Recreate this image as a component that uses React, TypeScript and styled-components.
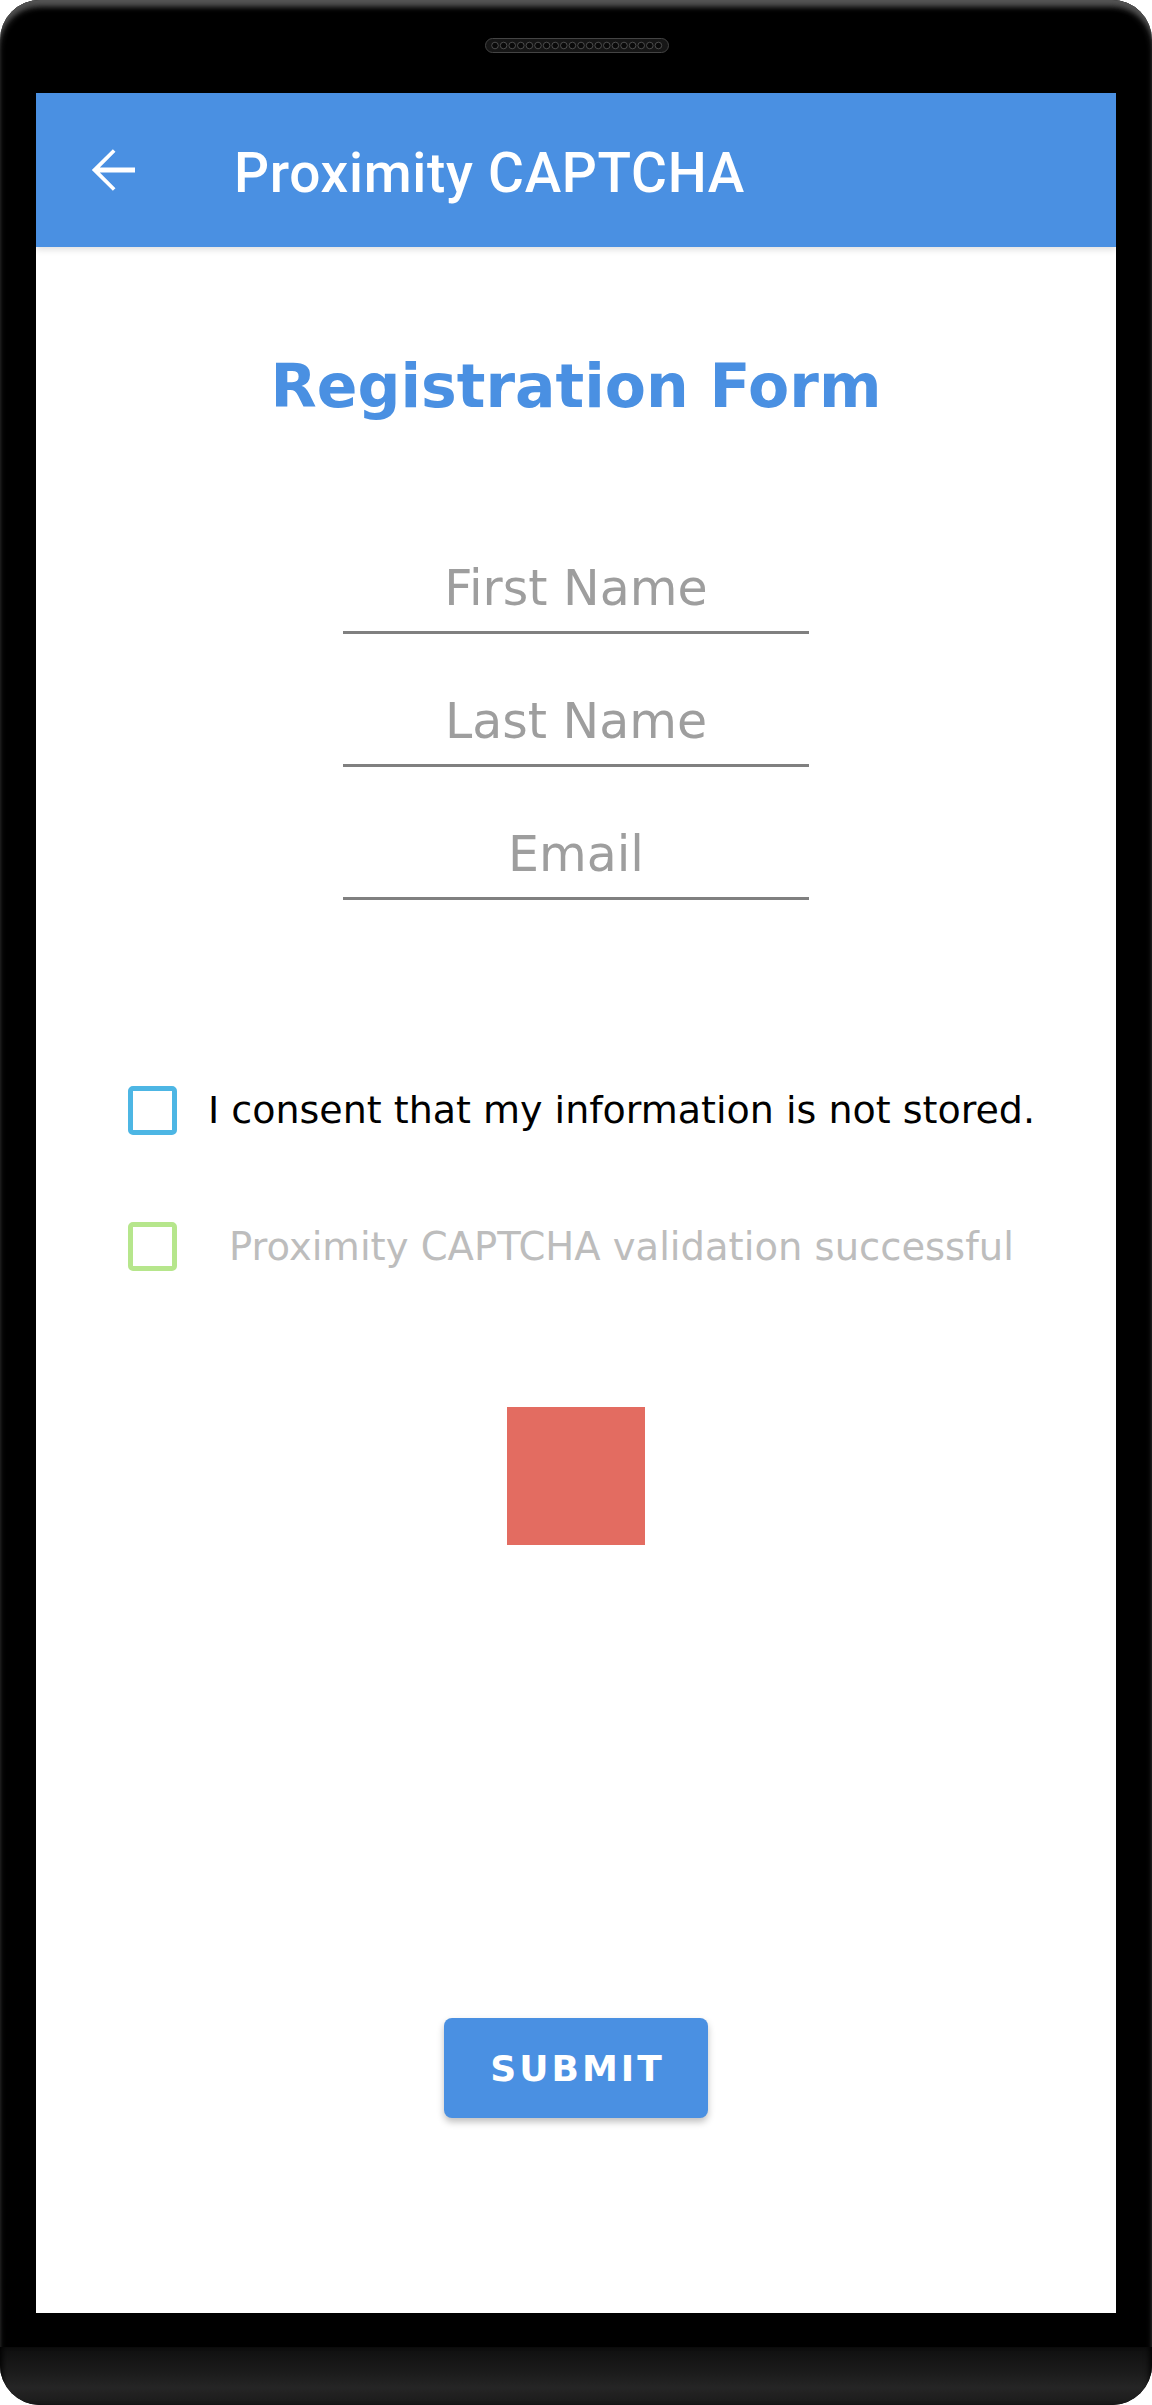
import * as React from 'react';
import styled, { createGlobalStyle } from 'styled-components';

const GlobalStyle = createGlobalStyle`
    html, body {
        margin: 0;
        padding: 0;
        background: #ffffff;
    }
    * {
        box-sizing: border-box;
    }
`;

const fields = ['First Name', 'Last Name', 'Email'];

const App = () => (
    <>
        <GlobalStyle />
        <Phone>
            <TopBezel>
                <Speaker />
            </TopBezel>
            <Screen>
                <AppBar>
                    <BackButton aria-label="back">
                        <svg width="66" height="66" viewBox="0 0 24 24">
                            <path
                                fill="#ffffff"
                                d="M20 11.1H7.2l5.7-5.7-0.95-0.95L4.3 12l7.65 7.55 0.95-0.95-5.7-5.7H20z"
                            />
                        </svg>
                    </BackButton>
                    <AppTitle>Proximity CAPTCHA</AppTitle>
                </AppBar>
                <Content>
                    <FormTitle>Registration Form</FormTitle>
                    <FieldList>
                        {fields.map((f) => (
                            <Field key={f}>
                                <FieldText>{f}</FieldText>
                            </Field>
                        ))}
                    </FieldList>
                    <Checks>
                        <CheckRow>
                            <CheckBox $color="#4db6e4" />
                            <CheckLabel $gap={31} $size={38} $color="#000000">
                                I consent that my information is not stored.
                            </CheckLabel>
                        </CheckRow>
                        <CheckRow>
                            <CheckBox $color="#b6e68c" />
                            <CheckLabel $gap={52} $size={38.5} $color="#bdbdbd">
                                Proximity CAPTCHA validation successful
                            </CheckLabel>
                        </CheckRow>
                    </Checks>
                    <Target />
                    <SubmitButton>SUBMIT</SubmitButton>
                </Content>
            </Screen>
            <BottomBezel>
                <Chin />
            </BottomBezel>
        </Phone>
    </>
);

const Speaker = () => (
    <SpeakerSvg width="184" height="15" viewBox="0 0 184 15">
        <rect x="0.5" y="0.5" width="183" height="14" rx="7" fill="#161616" stroke="#444" />
        {Array.from({ length: 20 }).map((_, i) => (
            <circle key={i} cx={10 + i * 8.6} cy="7.5" r="3.3" fill="#0a0a0a" stroke="#5a5a5a" strokeWidth="0.8" />
        ))}
    </SpeakerSvg>
);

const Phone = styled.div`
    width: 1152px;
    height: 2405px;
    background: #000000;
    border-radius: 40px;
    overflow: hidden;
    display: flex;
    flex-direction: column;
    box-shadow: inset 0 6px 4px -2px #555555, inset 3px 10px 6px -4px #3a3a3a,
        inset -3px 10px 6px -4px #3a3a3a;
`;

const TopBezel = styled.div`
    height: 93px;
    display: flex;
    justify-content: center;
    padding-top: 38px;
    padding-left: 2px;
`;

const SpeakerSvg = styled.svg`
    display: block;
`;

const Screen = styled.div`
    height: 2220px;
    margin: 0 36px;
    background: #ffffff;
    display: flex;
    flex-direction: column;
`;

const AppBar = styled.div`
    height: 154px;
    flex-shrink: 0;
    background: #4a90e2;
    display: flex;
    align-items: center;
    padding-left: 44px;
    box-shadow: 0 3px 6px rgba(0, 0, 0, 0.12);
    position: relative;
    z-index: 1;
`;

const BackButton = styled.div`
    width: 66px;
    height: 66px;
    svg {
        display: block;
    }
`;

const AppTitle = styled.div`
    margin-left: 88px;
    margin-top: 6px;
    color: #ffffff;
    font-family: 'Roboto', 'Liberation Sans', sans-serif;
    font-weight: 500;
    font-size: 55px;
    letter-spacing: 0.7px;
    line-height: 64px;
`;

const Content = styled.div`
    flex: 1;
    display: flex;
    flex-direction: column;
    align-items: center;
    font-family: 'DejaVu Sans', 'Liberation Sans', sans-serif;
`;

const FormTitle = styled.h1`
    margin: 99px 0 0;
    height: 80px;
    line-height: 80px;
    font-size: 60px;
    font-weight: 700;
    color: #4a90e2;
`;

const FieldList = styled.div`
    margin-top: 130px;
    display: flex;
    flex-direction: column;
    gap: 55px;
`;

const Field = styled.div`
    width: 466px;
    padding-bottom: 9px;
    border-bottom: 3px solid #808080;
    text-align: center;
`;

const FieldText = styled.div`
    height: 66px;
    line-height: 66px;
    font-size: 49px;
    color: #9e9e9e;
`;

const Checks = styled.div`
    align-self: stretch;
    margin-top: 186px;
    padding-left: 92px;
    display: flex;
    flex-direction: column;
    gap: 87px;
`;

const CheckRow = styled.div`
    display: flex;
    align-items: center;
    height: 49px;
`;

const CheckBox = styled.div<{ $color: string }>`
    width: 49px;
    height: 49px;
    flex-shrink: 0;
    border: 5px solid ${({ $color }) => $color};
    border-radius: 5px;
`;

const CheckLabel = styled.div<{ $gap: number; $size: number; $color: string }>`
    margin-left: ${({ $gap }) => $gap}px;
    font-size: ${({ $size }) => $size}px;
    line-height: 49px;
    color: ${({ $color }) => $color};
    white-space: nowrap;
`;

const Target = styled.div`
    margin-top: 136px;
    width: 138px;
    height: 138px;
    background: #e36c61;
`;

const SubmitButton = styled.button`
    margin-top: 473px;
    width: 264px;
    height: 100px;
    border: none;
    border-radius: 8px;
    background: #4a90e2;
    color: #ffffff;
    font-family: 'DejaVu Sans', 'Liberation Sans', sans-serif;
    font-weight: 700;
    font-size: 36px;
    letter-spacing: 3px;
    padding: 0 0 0 3px;
    box-shadow: 0 4px 7px rgba(0, 0, 0, 0.25);
    cursor: pointer;
`;

const BottomBezel = styled.div`
    flex: 1;
    padding-top: 34px;
    display: flex;
    flex-direction: column;
`;

const Chin = styled.div`
    flex: 1;
    background: linear-gradient(to bottom, #0f0f0f 0%, #1c1c1c 45%, #252525 70%, #1a1a1a 100%);
    box-shadow: inset 6px 0 6px -4px #000, inset -6px 0 6px -4px #000;
`;

export default App;
